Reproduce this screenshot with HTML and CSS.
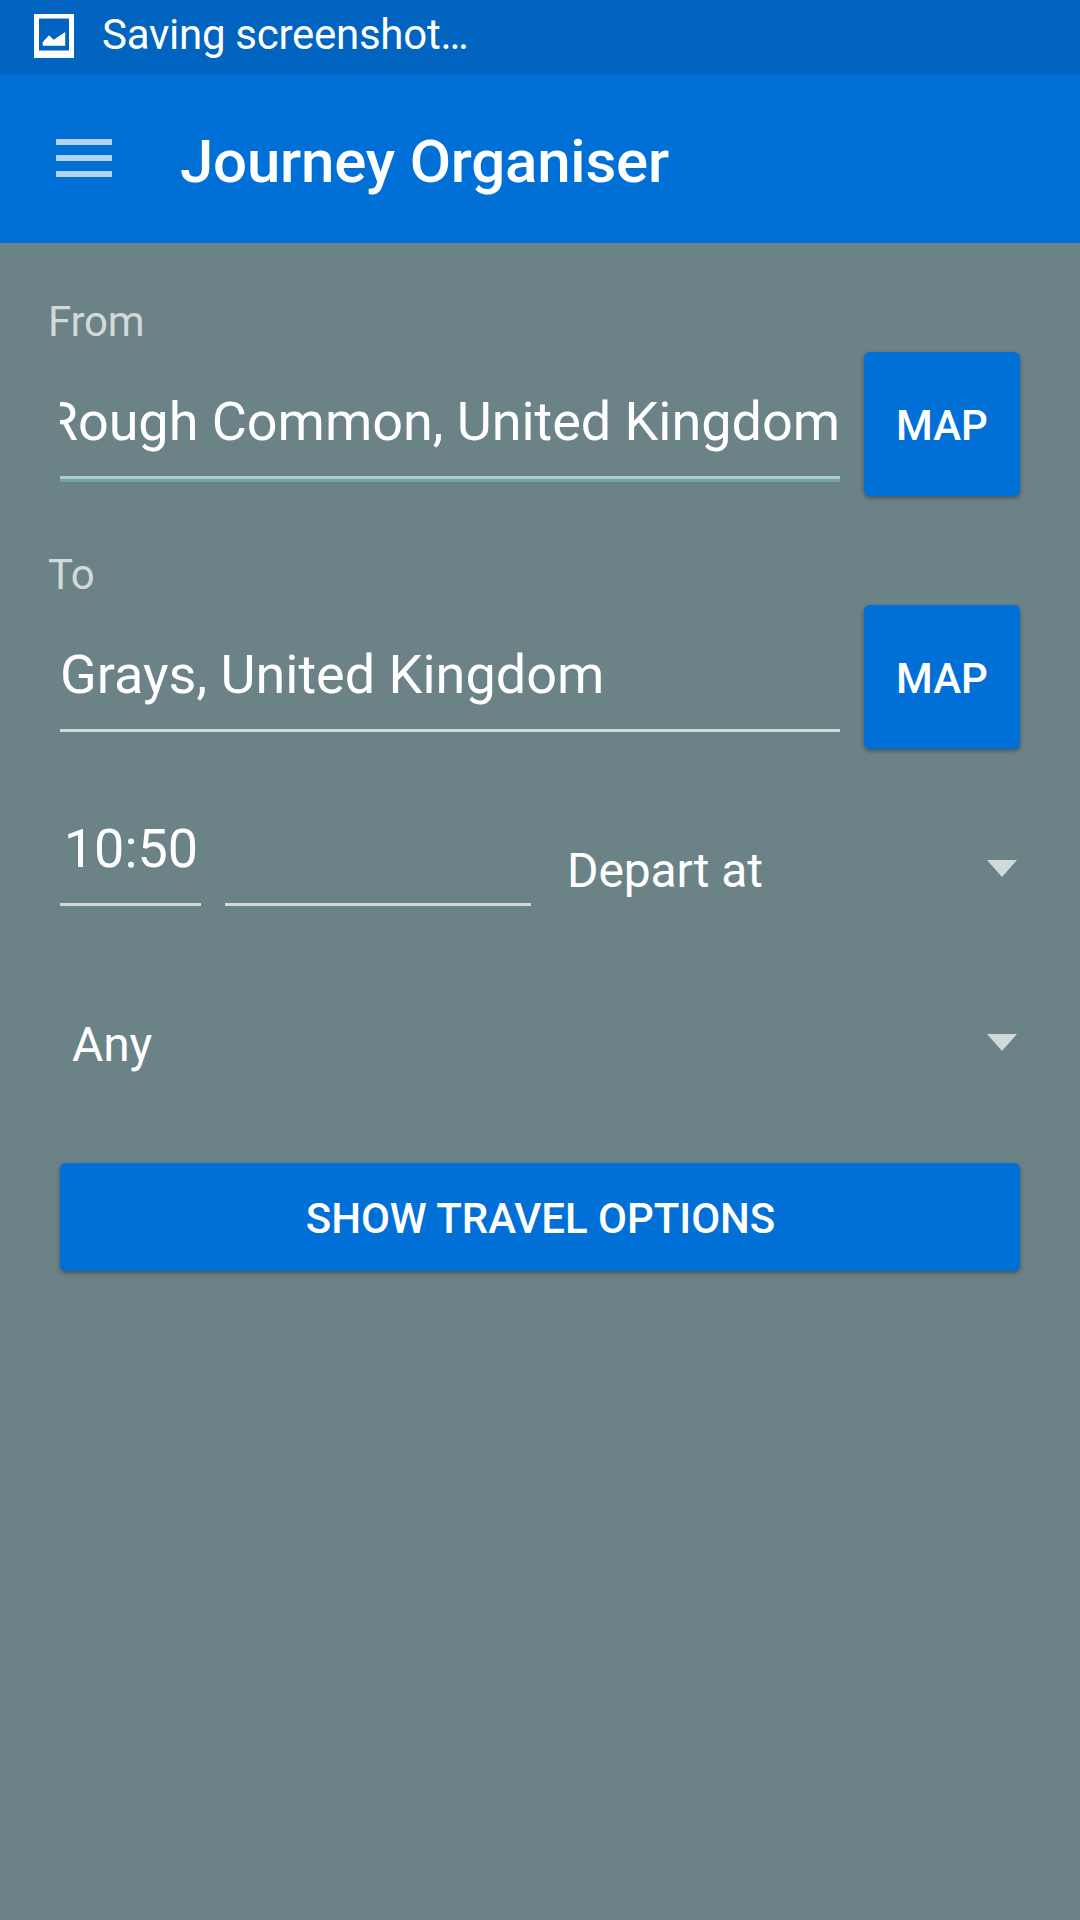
FILE: index.html
```html
<!DOCTYPE html>
<html lang="en">
<head>
<meta charset="utf-8">
<title>Journey Organiser</title>
<link rel="stylesheet" href="styles.css">
</head>
<body>
<div class="status-bar">
  <svg class="status-icon" width="40" height="44" viewBox="0 0 40 44"><path fill="#fff" fill-rule="evenodd" d="M0 0h40v44H0zM5 4.500v32h30v-32z"/><path fill="#fff" d="M8.700 31.700v-3.400l6.300-7 4.700 4.500L31.200 18v13.700z"/></svg>
  <span>Saving screenshot…</span>
</div>
<header class="app-bar">
  <svg class="menu" width="56" height="38" viewBox="0 0 56 38"><path fill="#b2d3f3" d="M0 0h56v6H0zM0 16h56v6H0zM0 32h56v6H0z"/></svg>
  <h1 class="title">Journey Organiser</h1>
</header>
<main class="form">
  <div class="label">From</div>
  <div class="row">
    <div class="field focused"><span class="value">Rough Common, United Kingdom</span></div>
    <button class="button map">MAP</button>
  </div>
  <div class="label">To</div>
  <div class="row">
    <div class="field"><span class="value">Grays, United Kingdom</span></div>
    <button class="button map">MAP</button>
  </div>
  <div class="time-row">
    <div class="field time"><span class="value">10:50</span></div>
    <div class="field date"></div>
    <div class="spinner"><span>Depart at</span><svg class="arrow" width="30" height="17" viewBox="0 0 30 17"><path fill="#d2d9db" d="M0 0h30L15 17z"/></svg></div>
  </div>
  <div class="spinner mode"><span>Any</span><svg class="arrow" width="30" height="17" viewBox="0 0 30 17"><path fill="#d2d9db" d="M0 0h30L15 17z"/></svg></div>
  <button class="button submit">SHOW TRAVEL OPTIONS</button>
</main>
</body>
</html>
```
FILE: styles.css
```css
* {
  box-sizing: border-box;
}

body {
  margin: 0;
  height: 1920px;
  overflow: hidden;
  background: #6b8287;
  color: #fff;
  font-family: Roboto, sans-serif;
}

.status-bar {
  display: flex;
  align-items: flex-start;
  gap: 28px;
  height: 75px;
  padding: 10px 34px 0;
  background: #0064c0;
  font-size: 42px;
  letter-spacing: -0.27px;
  line-height: 49px;
}

.status-icon {
  margin-top: 4px;
}

.app-bar {
  display: flex;
  align-items: flex-start;
  gap: 68px;
  height: 168px;
  padding: 52px 56px 0;
  background: #006fd6;
}

.menu {
  margin-top: 12px;
}

.title {
  margin: 0;
  font-size: 60px;
  font-weight: 500;
  letter-spacing: -0.22px;
  line-height: 70px;
}

.form {
  padding: 54px 60px 0;
}

.label {
  height: 55px;
  margin-left: -12px;
  color: #d2d9db;
  font-size: 42px;
  letter-spacing: -0.25px;
  line-height: 49px;
}

.row {
  display: flex;
  gap: 24px;
  height: 144px;
  margin-bottom: 54px;
}

.field {
  display: flex;
  flex: 1;
  min-width: 0;
  height: 127px;
  padding-top: 38px;
  overflow: hidden;
  border-bottom: 3px solid #d2d9db;
  font-size: 54px;
  line-height: 64px;
}

.field.focused {
  justify-content: flex-end;
  height: 130px;
  border-bottom-color: #73a3a5;
  box-shadow: inset 0 -3px #a8cfd0;
  letter-spacing: -0.04px;
}

.value {
  flex: none;
  white-space: nowrap;
}

.button {
  padding: 0;
  border: 0;
  border-radius: 6px;
  background: #006fd6;
  box-shadow: 0 2px 4px rgba(0, 0, 0, 0.35);
  color: #fff;
  font: 500 42px/49px Roboto, sans-serif;
}

.map {
  width: 156px;
  padding-top: 2px;
}

.time-row {
  display: flex;
  gap: 24px;
  height: 103px;
}

.time-row .field {
  height: 103px;
  padding-top: 14px;
}

.time {
  flex: 0 0 141px;
  justify-content: center;
  padding-left: 1px;
}

.date {
  flex: 0 0 306px;
}

.spinner {
  display: flex;
  flex: 1;
  align-items: flex-start;
  justify-content: space-between;
  padding: 40px 3px 0 12px;
  font-size: 48px;
  letter-spacing: -0.12px;
  line-height: 56px;
}

.arrow {
  margin-top: 17px;
}

.mode {
  height: 257px;
  padding-top: 111px;
}

.submit {
  display: block;
  width: 100%;
  height: 108px;
  padding: 3px 0 0 1px;
  letter-spacing: -0.04px;
}
```
